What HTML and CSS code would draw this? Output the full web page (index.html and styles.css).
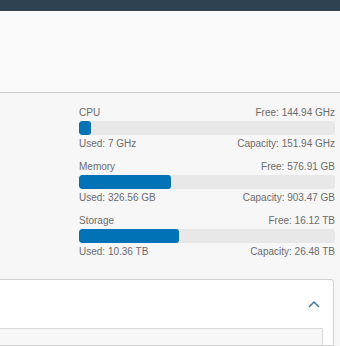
FILE: index.html
```html
<!DOCTYPE html>
<html lang="en">
  <head>
    <meta charset="UTF-8" />
    <meta name="viewport" content="width=device-width, initial-scale=1.0" />
    <link rel="stylesheet" href="styles.css">
    <title>Cluster Capacity</title>
  </head>
  <body>
    <header class="topbar"></header>
    <div class="summary"></div>

    <section class="capacity">
      <div class="meter">
        <div class="meter-row">
          <span>CPU</span>
          <span>Free: 144.94 GHz</span>
        </div>
        <div class="bar"><div class="fill" style="width: 4.6%"></div></div>
        <div class="meter-row">
          <span>Used: 7 GHz</span>
          <span>Capacity: 151.94 GHz</span>
        </div>
      </div>

      <div class="meter">
        <div class="meter-row">
          <span>Memory</span>
          <span>Free: 576.91 GB</span>
        </div>
        <div class="bar"><div class="fill" style="width: 36.1%"></div></div>
        <div class="meter-row">
          <span>Used: 326.56 GB</span>
          <span>Capacity: 903.47 GB</span>
        </div>
      </div>

      <div class="meter">
        <div class="meter-row">
          <span>Storage</span>
          <span>Free: 16.12 TB</span>
        </div>
        <div class="bar"><div class="fill" style="width: 39.1%"></div></div>
        <div class="meter-row">
          <span>Used: 10.36 TB</span>
          <span>Capacity: 26.48 TB</span>
        </div>
      </div>
    </section>

    <section class="card">
      <div class="card-head">
        <button class="toggle" aria-label="Collapse">
          <svg width="12" height="8" viewBox="0 0 12 8">
            <polyline points="1,7 6,2 11,7" fill="none" stroke="#3b7aa3" stroke-width="1.5" />
          </svg>
        </button>
      </div>
      <div class="card-body"></div>
    </section>
  </body>
</html>
```

FILE: styles.css
```css
* {
  box-sizing: border-box;
  margin: 0;
  padding: 0;
}

body {
  background-color: #f7f7f7;
  font-family: "Liberation Sans", Arial, sans-serif;
  font-size: 10px;
  color: #6b6b6b;
  overflow: hidden;
}

.topbar {
  height: 11px;
  background-color: #2f4252;
}

.summary {
  height: 82px;
  background-color: #fafafa;
  border-bottom: 1px solid #cacaca;
}

.capacity {
  padding: 14px 5px 0 79px;
  display: flex;
  flex-direction: column;
  gap: 11px;
}

.meter {
  display: flex;
  flex-direction: column;
}

.meter-row {
  display: flex;
  justify-content: space-between;
  height: 12px;
  line-height: 12px;
}

.bar {
  height: 14px;
  margin: 2px 0 3px;
  background-color: #e8e8e8;
  border-radius: 3px;
  overflow: hidden;
}

.fill {
  height: 100%;
  background-color: #0072b5;
  border-radius: 3px;
}

.card {
  margin: 21px 6px 0 -1px;
  background-color: #fff;
  border: 1px solid #cfcfcf;
  border-radius: 0 3px 0 0;
}

.card-head {
  height: 48px;
  display: flex;
  align-items: center;
  justify-content: flex-end;
  padding-right: 12px;
}

.toggle {
  border: none;
  background: none;
  width: 14px;
  height: 14px;
  display: flex;
  align-items: center;
  justify-content: center;
}

.card-body {
  height: 17px;
  margin-right: 10px;
  margin-left: -1px;
  background-color: #f7f7f7;
  border: 1px solid #d8d8d8;
  border-bottom: none;
  border-radius: 0 2px 0 0;
}
```
